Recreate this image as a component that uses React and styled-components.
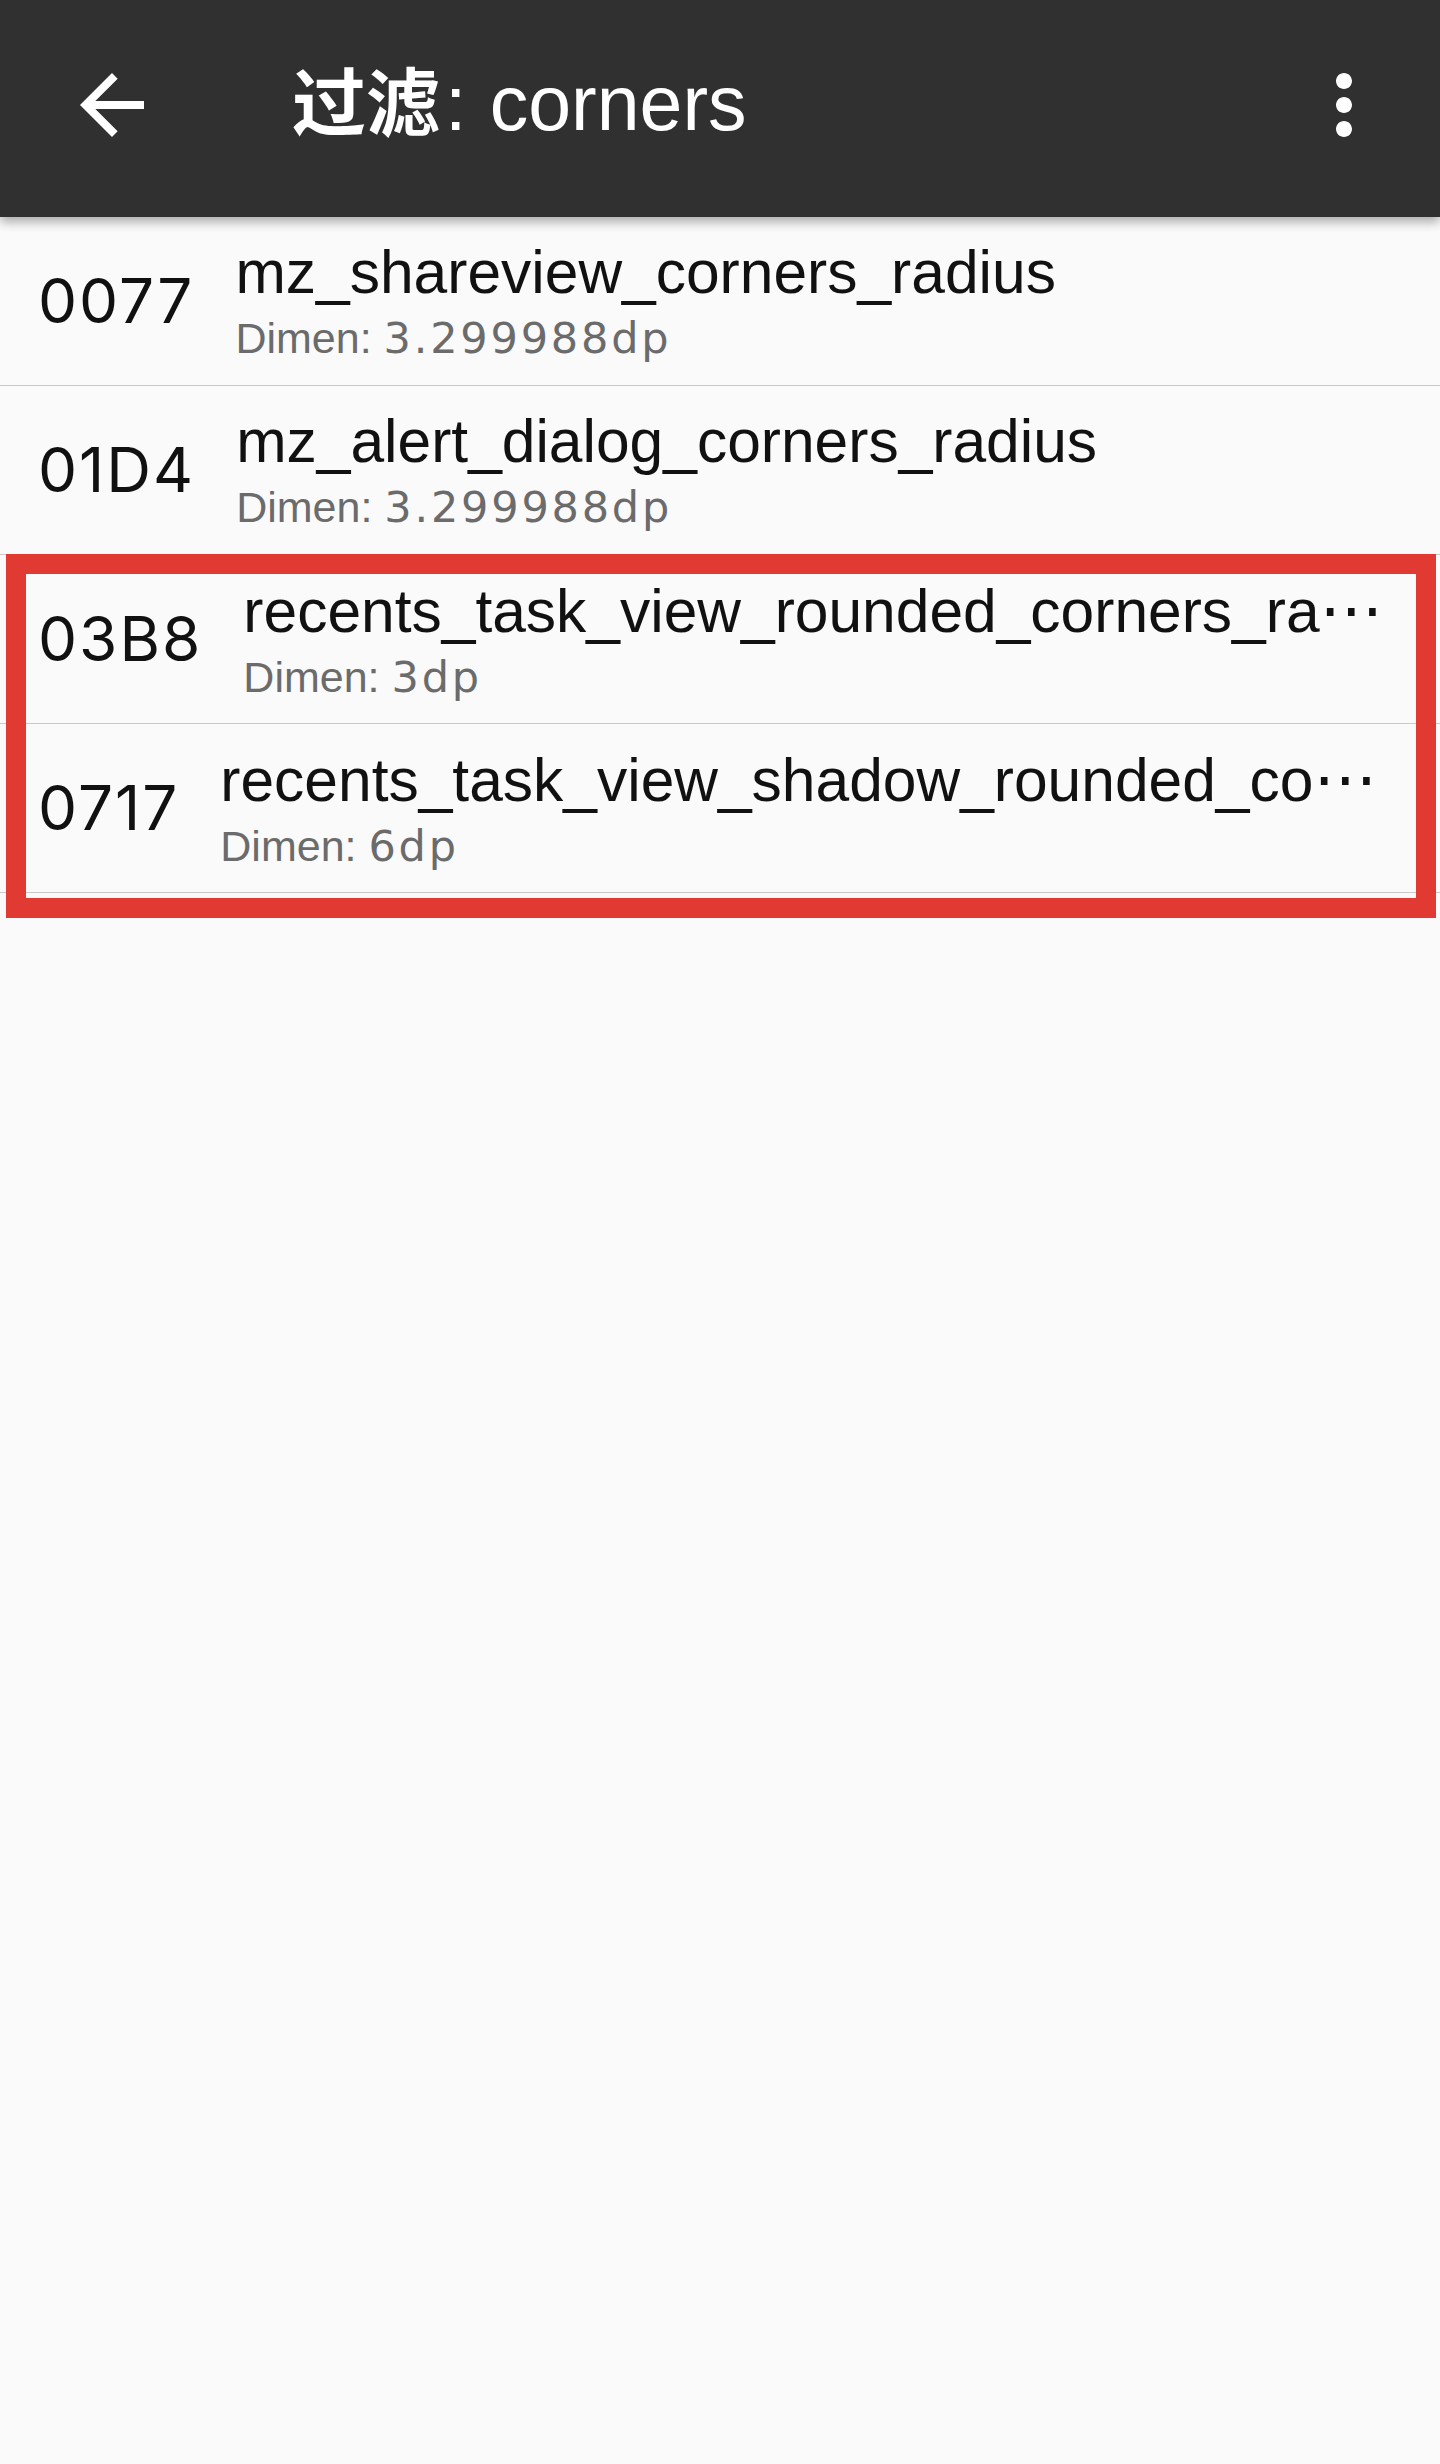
import React from "react";
import styled, { createGlobalStyle } from "styled-components";
import { MdArrowBack, MdMoreVert } from "react-icons/md";

const Global = createGlobalStyle`
  html, body {
    margin: 0;
    padding: 0;
    background: #fafafa;
  }
  #root {
    min-height: 100vh;
    background: #fafafa;
  }
`;

const Screen = styled.div`
  display: flex;
  flex-direction: column;
  min-height: 100vh;
  background: #fafafa;
`;

const Toolbar = styled.header`
  position: relative;
  z-index: 1;
  display: flex;
  align-items: center;
  height: 217px;
  box-sizing: border-box;
  padding: 0 48px 8px 64px;
  background: #303030;
  color: #fff;
  box-shadow: 0 5px 10px rgba(0, 0, 0, 0.32);
`;

const IconButton = styled.span`
  display: flex;
  flex: none;
  width: 96px;
  height: 96px;
  color: #fff;
  svg {
    width: 96px;
    height: 96px;
  }
`;

const Title = styled.h1`
  flex: 1;
  margin: 0 0 6px 132px;
  font: 400 77px/1 "Liberation Sans", "Noto Sans CJK SC", sans-serif;
  word-spacing: 2px;
  color: #fff;
  white-space: nowrap;
`;

const Cjk = styled.span`
  margin-right: 5px;
  font-family: "Noto Sans CJK SC", sans-serif;
  font-size: 74px;
  font-weight: 700;
`;

const List = styled.div`
  display: flex;
  flex-direction: column;
`;

const Row = styled.div`
  display: flex;
  align-items: center;
  gap: 41px;
  height: 169px;
  box-sizing: border-box;
  padding: 0 45px 0 38px;
  border-bottom: 1px solid #c9c9c9;
`;

const Id = styled.span`
  flex: none;
  font: 400 62px/1 Inter, "Liberation Sans", sans-serif;
  letter-spacing: 2px;
  color: #111;
`;

const Info = styled.div`
  flex: 1;
  min-width: 0;
  display: flex;
  flex-direction: column;
  padding-top: 4px;
`;

const Name = styled.div`
  font: 400 60.5px/70px "Liberation Sans", sans-serif;
  color: #111;
  white-space: nowrap;
`;

const More = styled.span`
  font-family: "DejaVu Sans", sans-serif;
  font-size: 64px;
`;

const Sub = styled.div`
  font: 400 43px/62px "Liberation Sans", sans-serif;
  color: #6b6b6b;
  white-space: nowrap;
`;

const Value = styled.span`
  font-family: "DejaVu Sans", sans-serif;
  letter-spacing: 2.8px;
`;

const Highlight = styled.div`
  position: relative;
  &::after {
    content: "";
    position: absolute;
    top: -1px;
    left: 6px;
    right: 4px;
    bottom: -25px;
    border: 20px solid #e03a33;
    pointer-events: none;
  }
`;

const items = [
  { id: "0077", name: "mz_shareview_corners_radius", value: "3.299988dp" },
  { id: "01D4", name: "mz_alert_dialog_corners_radius", value: "3.299988dp" },
  { id: "03B8", name: "recents_task_view_rounded_corners_ra", value: "3dp", cut: true },
  { id: "0717", name: "recents_task_view_shadow_rounded_co", value: "6dp", cut: true },
];

function Item({ item }) {
  return (
    <Row>
      <Id>{item.id}</Id>
      <Info>
        <Name>
          {item.name}
          {item.cut && <More>⋯</More>}
        </Name>
        <Sub>
          Dimen: <Value>{item.value}</Value>
        </Sub>
      </Info>
    </Row>
  );
}

export default function App() {
  return (
    <Screen>
      <Global />
      <Toolbar>
        <IconButton>
          <MdArrowBack />
        </IconButton>
        <Title>
          <Cjk>过滤</Cjk>: corners
        </Title>
        <IconButton>
          <MdMoreVert />
        </IconButton>
      </Toolbar>
      <List>
        <Item item={items[0]} />
        <Item item={items[1]} />
        <Highlight>
          <Item item={items[2]} />
          <Item item={items[3]} />
        </Highlight>
      </List>
    </Screen>
  );
}
